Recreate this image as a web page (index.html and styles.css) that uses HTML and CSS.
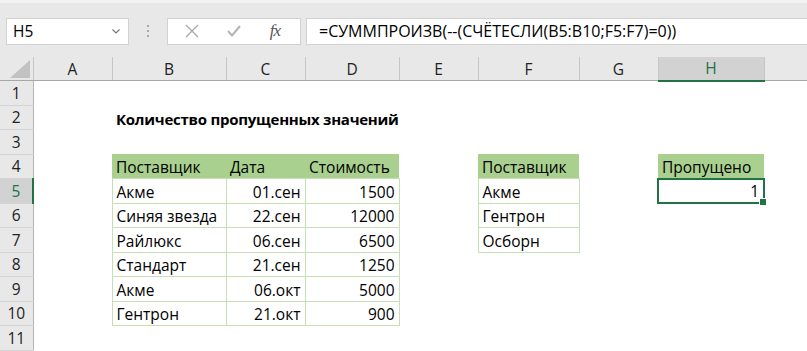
FILE: index.html
```html
<!DOCTYPE html>
<html lang="ru">
<head>
  <meta charset="UTF-8" />
  <title>Книга1 - Excel</title>
  <link rel="stylesheet" href="styles.css">
</head>
<body>
  <div class="toolbar">
    <div class="namebox">
      <span>H5</span>
      <svg class="caret" width="8" height="5" viewBox="0 0 8 5"><path d="M0.5 0.5 L4 4 L7.5 0.5" fill="none" stroke="#777" stroke-width="1.2"/></svg>
    </div>
    <div class="grip"><i></i><i></i><i></i></div>
    <div class="fx-buttons">
      <svg width="14" height="14" viewBox="0 0 14 14"><path d="M1 1 L13 13 M13 1 L1 13" stroke="#a8a8a8" stroke-width="1.3" fill="none"/></svg>
      <svg width="14" height="12" viewBox="0 0 14 12"><path d="M1 6 L5 10.5 L13 1" stroke="#b4b4b4" stroke-width="2" fill="none"/></svg>
      <span class="fx">fx</span>
    </div>
    <div class="formula">=СУММПРОИЗВ(--(СЧЁТЕСЛИ(B5:B10;F5:F7)=0))</div>
  </div>

  <table class="sheet">
    <colgroup>
      <col class="w-hdr"><col class="w-a"><col class="w-b"><col class="w-c"><col class="w-d">
      <col class="w-e"><col class="w-f"><col class="w-g"><col class="w-h"><col class="w-i">
    </colgroup>
    <thead>
      <tr>
        <th class="corner"><svg width="33" height="23" viewBox="0 0 33 23"><polygon points="10,21 30,21 30,3" fill="#c2c2c2"/></svg></th>
        <th>A</th><th>B</th><th>C</th><th>D</th><th>E</th><th>F</th><th>G</th><th class="sel">H</th><th></th>
      </tr>
    </thead>
    <tbody>
      <tr><th>1</th><td></td><td></td><td></td><td></td><td></td><td></td><td></td><td></td><td></td></tr>
      <tr><th>2</th><td></td><td class="title">Количество пропущенных значений</td><td></td><td></td><td></td><td></td><td></td><td></td><td></td></tr>
      <tr><th>3</th><td></td><td></td><td></td><td></td><td></td><td></td><td></td><td></td><td></td></tr>
      <tr><th>4</th><td></td><td class="hd">Поставщик</td><td class="hd">Дата</td><td class="hd">Стоимость</td><td></td><td class="hd">Поставщик</td><td></td><td class="hd">Пропущено</td><td></td></tr>
      <tr><th class="sel">5</th><td></td><td class="bx">Акме</td><td class="bx num">01.сен</td><td class="bx num">1500</td><td></td><td class="bx">Акме</td><td></td><td class="num active">1</td><td></td></tr>
      <tr><th>6</th><td></td><td class="bx">Синяя звезда</td><td class="bx num">22.сен</td><td class="bx num">12000</td><td></td><td class="bx">Гентрон</td><td></td><td></td><td></td></tr>
      <tr><th>7</th><td></td><td class="bx">Райлюкс</td><td class="bx num">06.сен</td><td class="bx num">6500</td><td></td><td class="bx">Осборн</td><td></td><td></td><td></td></tr>
      <tr><th>8</th><td></td><td class="bx">Стандарт</td><td class="bx num">21.сен</td><td class="bx num">1250</td><td></td><td></td><td></td><td></td><td></td></tr>
      <tr><th>9</th><td></td><td class="bx">Акме</td><td class="bx num">06.окт</td><td class="bx num">5000</td><td></td><td></td><td></td><td></td><td></td></tr>
      <tr><th>10</th><td></td><td class="bx">Гентрон</td><td class="bx num">21.окт</td><td class="bx num">900</td><td></td><td></td><td></td><td></td><td></td></tr>
      <tr><th>11</th><td></td><td></td><td></td><td></td><td></td><td></td><td></td><td></td><td></td></tr>
    </tbody>
  </table>
</body>
</html>
```

FILE: styles.css
```css
* { margin: 0; padding: 0; box-sizing: border-box; }
html, body {
  width: 100%; height: 100%; overflow: hidden;
  font-family: 'Open Sans', sans-serif;
  background: #fff; color: #000;
}

/* formula bar strip */
.toolbar {
  display: flex; align-items: center;
  height: 57px;
  padding: 16px 0 14px 6px;
  background: #e8e8e8;
  border-top: 3px solid #f2f2f2;
}
.namebox {
  width: 123px; height: 27px;
  display: flex; align-items: center; justify-content: space-between;
  padding: 0 8px 0 6px;
  background: #fff;
  border: 1px solid #d2d2d2;
  font-size: 15.5px;
}
.grip {
  width: 38px; height: 27px;
  display: flex; flex-direction: column; align-items: center; justify-content: center; gap: 3px;
}
.grip i { width: 2px; height: 2px; background: #a9a9a9; }
.fx-buttons {
  width: 134px; height: 27px;
  display: flex; align-items: center; justify-content: space-between;
  padding: 0 20px 0 17px;
  background: #fff;
  border: 1px solid #d2d2d2;
}
.fx {
  font-family: 'Liberation Serif', serif;
  font-style: italic;
  font-size: 17px;
  color: #555;
  letter-spacing: -1px;
}
.formula {
  flex: 1; height: 27px;
  margin-left: 5px;
  padding-left: 12px;
  display: flex; align-items: center;
  background: #fff;
  border: 1px solid #d2d2d2;
  border-right: none;
  font-size: 16px;
}

/* worksheet */
.sheet {
  border-collapse: collapse;
  table-layout: fixed;
  width: 807px;
  font-size: 15.5px;
}
.w-hdr { width: 33px; }
.w-a { width: 79px; }
.w-b { width: 114px; }
.w-c { width: 79px; }
.w-d { width: 94px; }
.w-e { width: 79px; }
.w-f { width: 101px; }
.w-g { width: 79px; }
.w-h { width: 106px; }
.w-i { width: 43px; }

thead th {
  height: 23px;
  background: #e8e8e8;
  font-weight: normal;
  color: #222;
  border-right: 1px solid #c6c6c6;
  border-bottom: 1px solid #a8a8a8;
}
thead th.corner { padding: 0; line-height: 0; }
thead th.sel {
  background: #d2d2d2;
  color: #217346;
  border-bottom: 2px solid #217346;
}
tbody tr { height: 24.5px; }
tbody th {
  background: #e8e8e8;
  font-weight: normal;
  color: #222;
  border-bottom: 1px solid #d4d4d4;
  border-right: 1px solid #b4b4b4;
}
tbody th.sel {
  background: #d2d2d2;
  color: #217346;
  border-right: 2px solid #217346;
}
td {
  padding: 0 4px;
  white-space: nowrap;
  overflow: visible;
  vertical-align: bottom;
  line-height: 22px;
}
td.title { font-weight: bold; font-size: 15px; letter-spacing: -0.25px; }
td.hd { background: #a9d08e; }
td.bx { border: 1px solid #c6e0b4; }
td.num { text-align: right; }
td.active {
  position: relative;
  border: 2px solid #217346;
}
td.active::after {
  content: "";
  position: absolute;
  right: -4px; bottom: -4px;
  width: 6px; height: 6px;
  background: #217346;
  border: 1px solid #fff;
}
```
